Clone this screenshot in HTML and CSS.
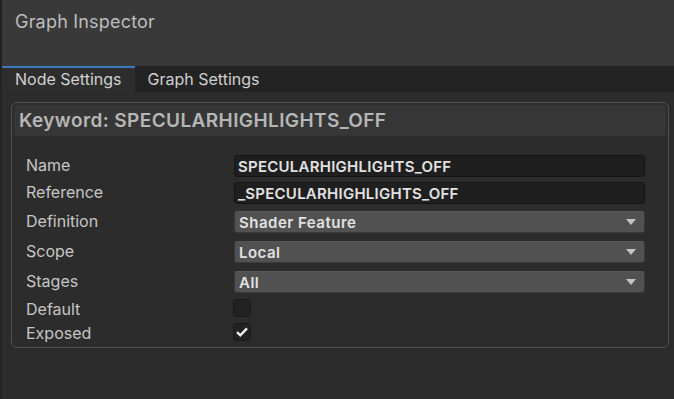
FILE: index.html
```html
<!DOCTYPE html>
<html lang="en">
  <head>
    <meta charset="UTF-8" />
    <title>Graph Inspector</title>
    <link rel="stylesheet" href="styles.css">
  </head>
  <body>
    <div class="inspector">
      <!-- Window title -->
      <div class="title-bar">Graph Inspector</div>

      <!-- Tabs -->
      <div class="tabs">
        <div class="tab active">Node Settings</div>
        <div class="tab">Graph Settings</div>
      </div>

      <div class="content">
        <div class="card">
          <div class="card-header">Keyword: SPECULARHIGHLIGHTS_OFF</div>

          <div class="rows">
            <div class="row row-text">
              <span class="label">Name</span>
              <div class="field">SPECULARHIGHLIGHTS_OFF</div>
            </div>
            <div class="row row-text">
              <span class="label">Reference</span>
              <div class="field">_SPECULARHIGHLIGHTS_OFF</div>
            </div>
            <div class="row row-select">
              <span class="label">Definition</span>
              <div class="select">Shader Feature<span class="arrow"></span></div>
            </div>
            <div class="row row-select">
              <span class="label">Scope</span>
              <div class="select">Local<span class="arrow"></span></div>
            </div>
            <div class="row row-select">
              <span class="label">Stages</span>
              <div class="select">All<span class="arrow"></span></div>
            </div>
            <div class="row row-check">
              <span class="label">Default</span>
              <div class="checkbox"></div>
            </div>
            <div class="row row-check">
              <span class="label">Exposed</span>
              <div class="checkbox">
                <svg width="14" height="12" viewBox="0 0 14 12">
                  <polyline points="2,6.2 5.3,9.4 12,2.4" fill="none" stroke="#f0f0f0" stroke-width="2.4" />
                </svg>
              </div>
            </div>
          </div>
        </div>
      </div>
    </div>
  </body>
</html>
```

FILE: styles.css
```css
/* Unity-like dark inspector */
body {
  margin: 0;
  background-color: #2c2c2c;
  font-family: Inter, "Noto Sans", sans-serif;
  color: #c4c4c4;
}

.inspector {
  width: 672px;
  height: 399px;
  border-left: 2px solid #232323;
  background-color: #2c2c2c;
}

.title-bar {
  height: 66px;
  box-sizing: border-box;
  padding: 11px 0 0 13px;
  background-color: #393939;
  font-size: 18px;
  letter-spacing: 0.2px;
  line-height: 22px;
  color: #bdbdbd;
}

.tabs {
  display: flex;
  height: 26px;
  background-color: #232323;
}

.tab {
  padding: 0 13px;
  font-size: 16px;
  line-height: 26px;
  color: #d0d0d0;
}

.tab.active {
  background-color: #2d2d2d;
  box-shadow: inset 0 2px 0 #3a79bb;
}

.content {
  padding: 10px 5px 0 9px;
}

.card {
  border: 1px solid #505050;
  border-radius: 6px;
  padding: 2px 2px 0 2px;
}

.card-header {
  height: 31px;
  padding-left: 5px;
  background-color: #363636;
  border-radius: 4px;
  font-size: 19px;
  font-weight: 600;
  letter-spacing: 0.4px;
  line-height: 31px;
  color: #b6b6b6;
}

.rows {
  display: flex;
  flex-direction: column;
  padding: 19px 21px 0 12px;
}

.row {
  display: flex;
  align-items: center;
}

.label {
  width: 208px;
  font-size: 16px;
  color: #c6c6c6;
  position: relative;
  top: -1px;
}

.row-text {
  height: 22px;
  margin-bottom: 5px;
}

.row-select {
  height: 22px;
  margin-top: 2px;
  margin-bottom: 6px;
}

.row-check {
  height: 18px;
  margin-bottom: 6px;
}

.row-check .label {
  top: 1px;
}

.field,
.select {
  flex: 1;
  height: 22px;
  box-sizing: border-box;
  padding-left: 3px;
  border-radius: 3px;
  font-size: 15px;
  font-weight: 600;
  line-height: 21px;
  color: #e2e2e2;
}

.field {
  background-color: #1f1f1f;
  border: 1px solid #151515;
  letter-spacing: 0.25px;
}

.select {
  display: flex;
  justify-content: space-between;
  align-items: center;
  padding: 0 8px 0 4px;
  background-color: #515151;
  border: 1px solid #3a3a3a;
  border-top-color: #585858;
  letter-spacing: 0.5px;
}

.arrow {
  width: 0;
  height: 0;
  border-left: 5px solid transparent;
  border-right: 5px solid transparent;
  border-top: 6px solid #c4c4c4;
}

.checkbox {
  display: flex;
  align-items: center;
  justify-content: center;
  width: 18px;
  height: 18px;
  box-sizing: border-box;
  margin-left: -1px;
  background-color: #222222;
  border: 1px solid #191919;
  border-radius: 3px;
}
```
